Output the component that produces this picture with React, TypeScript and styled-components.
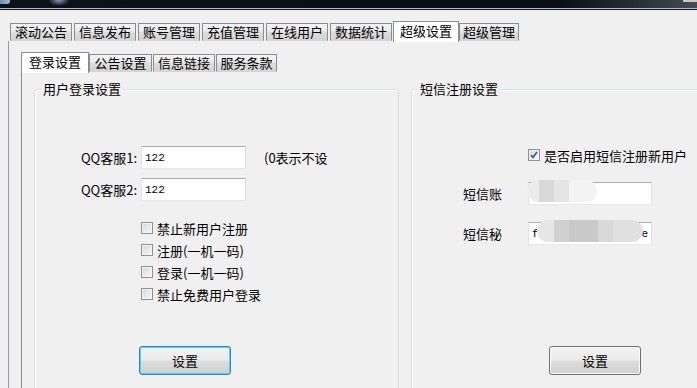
import React, { useState } from 'react';
import styled, { createGlobalStyle } from 'styled-components';

const GlobalStyle = createGlobalStyle`
  html, body {
    margin: 0;
    padding: 0;
    background: #f0f0f0;
  }
  body {
    font-family: 'Noto Sans CJK SC', 'Liberation Sans', sans-serif;
    font-size: 13px;
    color: #000;
  }
`;

const mainTabs = ['滚动公告', '信息发布', '账号管理', '充值管理', '在线用户', '数据统计', '超级设置', '超级管理'];
const subTabs = ['登录设置', '公告设置', '信息链接', '服务条款'];

const CheckMark = () => (
  <svg width="8" height="8" viewBox="0 0 8 8">
    <path d="M1 4 L3 6.5 L7 1" fill="none" stroke="#3b4f8e" strokeWidth="1.6" />
  </svg>
);

const Check: React.FC<{ checked?: boolean; label: string }> = ({ checked, label }) => (
  <CheckRow>
    <CheckBox>{checked && <CheckMark />}</CheckBox>
    <span>{label}</span>
  </CheckRow>
);

const App: React.FC = () => {
  const [mainTab] = useState(6);
  const [subTab] = useState(0);

  return (
    <>
      <GlobalStyle />
      <Window>
        <TitleBar>
          <TitleIcon />
          <TitleGlow />
          <TitleCorner />
        </TitleBar>
        <MainTabStrip>
          {mainTabs.map((t, i) => (
            <MainTab key={t} $active={i === mainTab} $last={i === mainTabs.length - 1}>
              {t}
            </MainTab>
          ))}
        </MainTabStrip>
        <MainPanel>
          <SubTabStrip>
            {subTabs.map((t, i) => (
              <SubTab key={t} $active={i === subTab} $w={[68, 63, 62, 61][i]}>
                {t}
              </SubTab>
            ))}
          </SubTabStrip>
          <SubPanel>
            <GroupBox $width={365}>
              <Legend>用户登录设置</Legend>
              <FieldRow $top={56} $labelWidth={102} $inputWidth={105}>
                <FieldLabel>QQ客服1:</FieldLabel>
                <TextBox>122</TextBox>
                <Hint>(0表示不设</Hint>
              </FieldRow>
              <FieldRow $top={9} $labelWidth={102} $inputWidth={105}>
                <FieldLabel>QQ客服2:</FieldLabel>
                <TextBox>122</TextBox>
              </FieldRow>
              <CheckList $top={16} $left={106}>
                <Check label="禁止新用户注册" />
                <Check label="注册(一机一码)" />
                <Check label="登录(一机一码)" />
                <Check label="禁止免费用户登录" />
              </CheckList>
              <Button $top={41} $left={104} $focused>
                设置
              </Button>
            </GroupBox>
            <GroupBox $width={320}>
              <Legend>短信注册设置</Legend>
              <CheckList $top={54} $left={116}>
                <Check checked label="是否启用短信注册新用户" />
              </CheckList>
              <FieldRow $top={16} $labelWidth={112} $inputWidth={124}>
                <SmsLabel>短信账</SmsLabel>
                <TextBox>
                  <Blur $left={-2} $width={70} $stops="#ececec 0 17%, #d9d9d9 17% 38%, #e4e4e4 38% 60%, #f3f3f3 60% 100%" />
                </TextBox>
              </FieldRow>
              <FieldRow $top={17} $labelWidth={112} $inputWidth={124}>
                <SmsLabel>短信秘</SmsLabel>
                <TextBox $spread>
                  <span>f</span>
                  <span>e</span>
                  <Blur $left={8} $width={106} $stops="#e6e6e6 0 16%, #d0d0d0 16% 30%, #c9c9c9 30% 58%, #d9d9d9 58% 72%, #e0e0e0 72% 100%" />
                </TextBox>
              </FieldRow>
              <Button $top={101} $left={137}>
                设置
              </Button>
            </GroupBox>
          </SubPanel>
        </MainPanel>
      </Window>
    </>
  );
};

const Window = styled.div`
  width: 697px;
  height: 388px;
  overflow: hidden;
  display: flex;
  flex-direction: column;
  background: #f0f0f0;
`;

const TitleBar = styled.div`
  position: relative;
  height: 8px;
  flex: none;
  display: flex;
  background: linear-gradient(90deg, #0c121a 0%, #0a0f17 80%, #2a3038 92%, #474d54 100%);
  border-bottom: 1px solid #b9bcbf;
  box-shadow: 0 1px 0 #141414;
  margin-bottom: 1px;
`;

const TitleIcon = styled.span`
  width: 10px;
  height: 4px;
  background: linear-gradient(90deg, #6a8fb8, #a8b8c8);
  border-radius: 0 0 3px 0;
`;

const TitleGlow = styled.span`
  margin-left: 38px;
  width: 22px;
  height: 6px;
  background: radial-gradient(ellipse at 50% 0%, rgba(190, 215, 240, 0.7), rgba(190, 215, 240, 0) 70%);
`;

const TitleCorner = styled.span`
  margin-left: auto;
  width: 14px;
  height: 2px;
  background: #c8c8c8;
`;

const MainTabStrip = styled.div`
  display: flex;
  align-items: flex-end;
  height: 20px;
  margin-top: 11px;
  padding-left: 10px;
  flex: none;
`;

const tabFace = `
  background: linear-gradient(#f3f3f3 0%, #ebebeb 45%, #dddddd 50%, #d4d4d4 100%);
`;

const MainTab = styled.div<{ $active?: boolean; $last?: boolean }>`
  box-sizing: border-box;
  width: ${(p) => (p.$active ? 66 : p.$last ? 60 : 62)}px;
  height: ${(p) => (p.$active ? 21 : 18)}px;
  margin-right: ${(p) => (p.$active ? 0 : 2)}px;
  margin-left: ${(p) => (p.$active ? -1 : 0)}px;
  margin-bottom: ${(p) => (p.$active ? -1 : 0)}px;
  border: 1px solid #898c95;
  border-bottom: ${(p) => (p.$active ? 'none' : '1px solid #d4d4d4')};
  ${(p) => (p.$active ? 'background: #ffffff;' : tabFace)}
  font-size: 13px;
  line-height: ${(p) => (p.$active ? 18 : 16)}px;
  text-align: center;
  white-space: nowrap;
  position: relative;
  z-index: ${(p) => (p.$active ? 1 : 0)};
`;

const MainPanel = styled.div`
  flex: 1;
  display: flex;
  flex-direction: column;
  margin-left: 8px;
  border-left: 1px solid #9a9ca3;
  padding-left: 12px;
  min-height: 0;
`;

const SubTabStrip = styled.div`
  display: flex;
  align-items: flex-end;
  height: 20px;
  margin-top: 11px;
  flex: none;
`;

const SubTab = styled.div<{ $active?: boolean; $w: number }>`
  box-sizing: border-box;
  width: ${(p) => p.$w}px;
  height: ${(p) => (p.$active ? 21 : 18)}px;
  margin-right: ${(p) => (p.$active ? 0 : 1)}px;
  margin-bottom: ${(p) => (p.$active ? -1 : 0)}px;
  border: 1px solid #898c95;
  border-bottom: ${(p) => (p.$active ? 'none' : '1px solid #d4d4d4')};
  ${(p) => (p.$active ? 'background: #ffffff;' : tabFace)}
  font-size: 13px;
  line-height: ${(p) => (p.$active ? 18 : 16)}px;
  text-align: center;
  white-space: nowrap;
`;

const SubPanel = styled.div`
  flex: 1;
  display: flex;
  gap: 12px;
  border-left: 1px solid #898c95;
  padding: 17px 0 0 12px;
  min-height: 0;
`;

const GroupBox = styled.div<{ $width: number }>`
  position: relative;
  box-sizing: border-box;
  flex: none;
  width: ${(p) => p.$width}px;
  height: 320px;
  display: flex;
  flex-direction: column;
  align-items: flex-start;
  border: 1px solid #d5dfe5;
  border-radius: 3px;
  box-shadow: inset 1px 1px 0 #ffffff;
`;

const Legend = styled.span`
  position: absolute;
  top: -9px;
  left: 6px;
  padding: 0 2px;
  background: #f0f0f0;
  font-size: 13px;
  line-height: 16px;
  white-space: nowrap;
`;

const FieldRow = styled.div<{ $top: number; $labelWidth: number; $inputWidth: number }>`
  display: grid;
  grid-template-columns: ${(p) => p.$labelWidth}px ${(p) => p.$inputWidth}px auto;
  column-gap: 4px;
  align-items: center;
  height: 23px;
  margin-top: ${(p) => p.$top}px;
`;

const FieldLabel = styled.span`
  text-align: right;
  font-size: 13px;
  white-space: nowrap;
`;

const SmsLabel = styled.span`
  padding-left: 51px;
  font-size: 13px;
  white-space: nowrap;
`;

const TextBox = styled.div<{ $spread?: boolean }>`
  position: relative;
  box-sizing: border-box;
  height: 23px;
  display: flex;
  align-items: center;
  justify-content: ${(p) => (p.$spread ? 'space-between' : 'flex-start')};
  padding: 0 3px;
  background: #ffffff;
  border: 1px solid;
  border-color: #abadb3 #dbdfe6 #e3e9ef #e2e3ea;
  font-family: 'Liberation Mono', 'DejaVu Sans Mono', monospace;
  font-size: 11px;
`;

const Blur = styled.span<{ $left: number; $width: number; $stops: string }>`
  position: absolute;
  top: -3px;
  left: ${(p) => p.$left}px;
  width: ${(p) => p.$width}px;
  height: 22px;
  border-radius: 11px;
  background: linear-gradient(90deg, ${(p) => p.$stops});
  filter: blur(0.6px);
`;

const Hint = styled.span`
  margin-left: 14px;
  font-size: 13px;
  white-space: nowrap;
`;

const CheckList = styled.div<{ $top: number; $left: number }>`
  display: flex;
  flex-direction: column;
  margin-top: ${(p) => p.$top}px;
  margin-left: ${(p) => p.$left}px;
`;

const CheckRow = styled.div`
  display: flex;
  align-items: center;
  gap: 4px;
  height: 22px;
  font-size: 13px;
  white-space: nowrap;
`;

const CheckBox = styled.span`
  box-sizing: border-box;
  width: 12px;
  height: 12px;
  display: flex;
  align-items: center;
  justify-content: center;
  border: 1px solid #8e8f8f;
  background: linear-gradient(135deg, #d0d3d8 0%, #e6e8eb 50%, #f6f6f6 100%);
  box-shadow: inset 0 0 0 1px #f4f4f4;
`;

const Button = styled.button<{ $top: number; $left: number; $focused?: boolean }>`
  box-sizing: border-box;
  width: 92px;
  height: 29px;
  margin-top: ${(p) => p.$top}px;
  margin-left: ${(p) => p.$left}px;
  padding: 0;
  border: 1px solid ${(p) => (p.$focused ? '#3c7fb1' : '#707070')};
  border-radius: 3px;
  background: linear-gradient(#f2f2f2 0%, #ebebeb 48%, #dddddd 52%, #cfcfcf 100%);
  box-shadow: ${(p) => (p.$focused ? 'inset 0 0 0 1px #48d8fb' : 'inset 0 0 0 1px #fbfbfb')};
  font-family: 'Noto Sans CJK SC', 'Liberation Sans', sans-serif;
  font-size: 13px;
  color: #000;
`;

export default App;
